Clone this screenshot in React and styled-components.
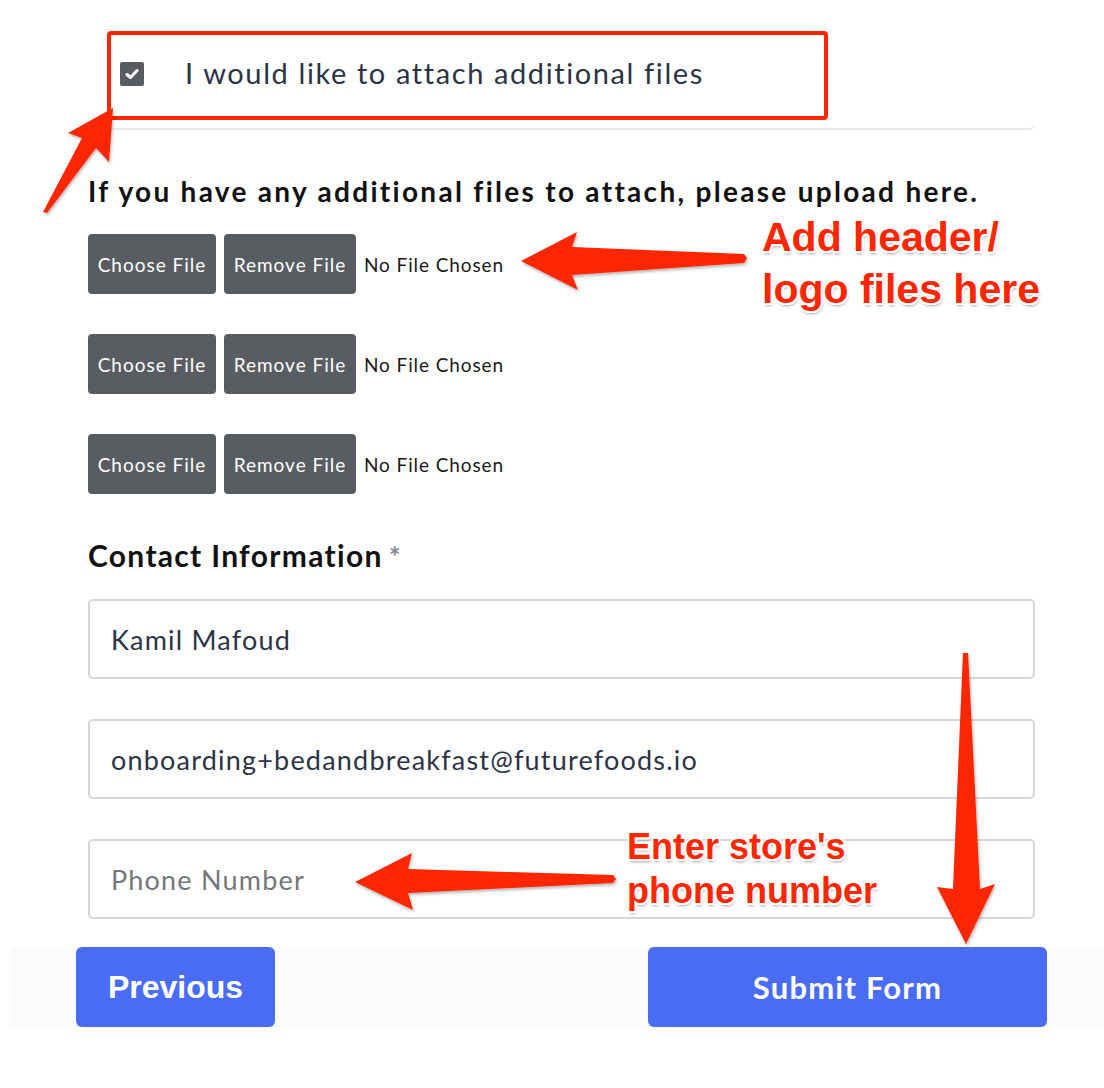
import React from 'react';
import styled, { createGlobalStyle } from 'styled-components';

const GlobalStyle = createGlobalStyle`
  body {
    margin: 0;
    background: #fff;
    font-family: Lato, "Open Sans", sans-serif;
  }
`;

const contacts = [
  { value: 'Kamil Mafoud' },
  { value: 'onboarding+bedandbreakfast@futurefoods.io' },
  { placeholder: 'Phone Number' },
];

const App = () => {
  return (
    <Page>
      <GlobalStyle />
      <Form>
        <CheckCard>
          <CheckBox>
            <svg width="14" height="12" viewBox="0 0 14 12">
              <path d="M2 6.5 L5.5 9.5 L12 2.5" fill="none" stroke="#fff" strokeWidth="3" strokeLinecap="round" strokeLinejoin="round" />
            </svg>
          </CheckBox>
          <CheckLabel>I would like to attach additional files</CheckLabel>
        </CheckCard>

        <Heading>If you have any additional files to attach, please upload here.</Heading>

        <FileList>
          {[0, 1, 2].map((i) => (
            <FileRow key={i}>
              <FileButton $width={128}>Choose File</FileButton>
              <FileButton $width={132}>Remove File</FileButton>
              <FileStatus>No File Chosen</FileStatus>
            </FileRow>
          ))}
        </FileList>

        <SectionLabel>
          Contact Information<Required>*</Required>
        </SectionLabel>

        <Fields>
          {contacts.map((c, i) => (
            <Field key={i} readOnly value={c.value || ''} placeholder={c.placeholder} />
          ))}
        </Fields>
      </Form>

      <Footer>
        <PrevButton>Previous</PrevButton>
        <SubmitButton>Submit Form</SubmitButton>
      </Footer>

      <Annotations width="1104" height="1088" viewBox="0 0 1104 1088">
        <defs>
          <filter id="shadow" x="-10%" y="-10%" width="120%" height="120%">
            <feDropShadow dx="1" dy="2" stdDeviation="1.5" floodColor="#000" floodOpacity="0.3" />
          </filter>
        </defs>
        <rect x="109" y="33" width="717" height="85" rx="2" fill="none" stroke="#ff2600" strokeWidth="4" />
        <g fill="#ff2600" filter="url(#shadow)">
          <polygon points="113,108 68,133 82,138 43,212 47,213 96,148 109,162" />
          <polygon points="521,261 577,232 572,247 744,254 747,258 744,263 572,275 578,290" />
          <polygon points="355,882 412,853 408,869 613,875 616,879 613,883 408,893 413,910" />
          <polygon points="963,653 968,653 980,889 995,884 966,944 937,887 953,889" />
        </g>
      </Annotations>

      <Note $top={211} $left={762} $size={41} $line={52}>
        Add header/
        <br />
        logo files here
      </Note>
      <Note $top={825} $left={627} $size={36} $line={44}>
        Enter store's
        <br />
        phone number
      </Note>
    </Page>
  );
};

export default App;

const Page = styled.div`
  position: relative;
  width: 1104px;
  height: 1088px;
  overflow: hidden;
  background: #fff;
`;

const Form = styled.div`
  width: 947px;
  padding-left: 88px;
  display: flex;
  flex-direction: column;
`;

const CheckCard = styled.div`
  height: 66px;
  padding: 62px 0 0 32px;
  display: flex;
  align-items: flex-start;
  gap: 41px;
  border-bottom: 2px solid #e8e8e8;
  border-bottom-right-radius: 6px;
`;

const CheckBox = styled.span`
  width: 24px;
  height: 24px;
  border-radius: 2px;
  background: #585c61;
  display: flex;
  align-items: center;
  justify-content: center;
  flex-shrink: 0;
`;

const CheckLabel = styled.span`
  font-size: 29px;
  line-height: 22px;
  letter-spacing: 1.6px;
  color: #2c3345;
`;

const Heading = styled.h2`
  margin: 45px 0 0;
  font-size: 28px;
  line-height: 32px;
  font-weight: 700;
  letter-spacing: 2.3px;
  color: #111;
  white-space: nowrap;
`;

const FileList = styled.div`
  margin-top: 27px;
  display: flex;
  flex-direction: column;
  gap: 40px;
`;

const FileRow = styled.div`
  display: flex;
  align-items: center;
  gap: 8px;
  height: 60px;
`;

const FileButton = styled.button`
  width: ${(p) => p.$width}px;
  height: 60px;
  padding: 0;
  border: none;
  border-radius: 4px;
  background: #595d62;
  color: #fff;
  font-family: Lato, sans-serif;
  font-size: 19px;
  letter-spacing: 1px;
`;

const FileStatus = styled.span`
  font-size: 19px;
  letter-spacing: 0.9px;
  color: #1a1a1a;
`;

const SectionLabel = styled.div`
  margin-top: 43px;
  font-size: 30px;
  line-height: 36px;
  font-weight: 700;
  letter-spacing: 1.3px;
  color: #111;
`;

const Required = styled.span`
  margin-left: 6px;
  color: #8a8d91;
  font-size: 28px;
`;

const Fields = styled.div`
  margin-top: 25px;
  display: flex;
  flex-direction: column;
  gap: 40px;
`;

const Field = styled.input`
  box-sizing: border-box;
  width: 947px;
  height: 80px;
  padding: 0 21px;
  border: 2px solid #d3d6da;
  border-radius: 5px;
  font-family: Lato, sans-serif;
  font-size: 27px;
  letter-spacing: 1.2px;
  color: #2c3345;
  outline: none;
  background: #fff;

  &::placeholder {
    color: #74777c;
  }
`;

const Footer = styled.div`
  margin: 28px 0 0 11px;
  padding: 0 57px 0 65px;
  height: 80px;
  display: flex;
  justify-content: space-between;
  align-items: flex-start;
  background: #fbfbfb;
`;

const PrevButton = styled.button`
  width: 199px;
  height: 80px;
  border: none;
  border-radius: 6px;
  background: #4a6cf5;
  color: #fff;
  font-family: "Liberation Sans", Arial, sans-serif;
  font-weight: 700;
  font-size: 32px;
`;

const SubmitButton = styled(PrevButton)`
  width: 399px;
  font-family: Lato, sans-serif;
  font-size: 31px;
  letter-spacing: 1.2px;
`;

const Annotations = styled.svg`
  position: absolute;
  inset: 0;
  pointer-events: none;
`;

const Note = styled.div`
  position: absolute;
  top: ${(p) => p.$top}px;
  left: ${(p) => p.$left}px;
  font-family: "Liberation Sans", Arial, sans-serif;
  font-weight: 700;
  font-size: ${(p) => p.$size}px;
  line-height: ${(p) => p.$line}px;
  color: #ff2600;
  white-space: nowrap;
  text-shadow:
    -1.5px -1.5px 0 #fff, 1.5px -1.5px 0 #fff, -1.5px 1.5px 0 #fff, 1.5px 1.5px 0 #fff,
    0 2px 0 #fff, 0 -2px 0 #fff, 2px 0 0 #fff, -2px 0 0 #fff,
    1px 3px 3px rgba(0, 0, 0, 0.35);
`;
